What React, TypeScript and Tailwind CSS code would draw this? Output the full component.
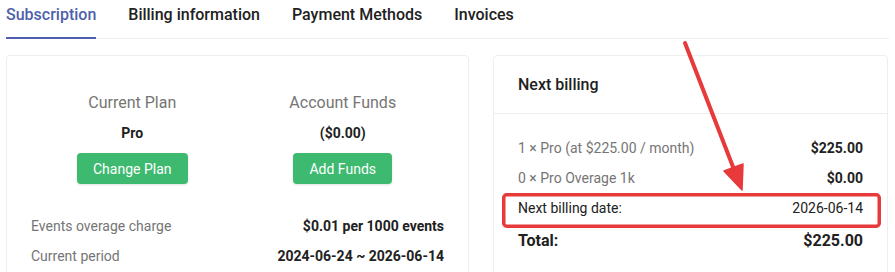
import React from "react";

export default function App() {
  return (
    <div className="relative w-[895px] h-[272px] overflow-hidden bg-white text-[#212121]" style={{ fontFamily: "Roboto, 'Liberation Sans', sans-serif" }}>
      <div className="mx-[6px] flex gap-8 h-[39px] border-b border-[#eeeeee]">
        <div className="h-[39px] -mb-px border-b-2 border-[#4f5fad] text-[#4f5fad] text-base font-medium leading-[30px]">Subscription</div>
        <div className="h-[39px] text-base font-medium leading-[30px]">Billing information</div>
        <div className="h-[39px] text-base font-medium leading-[30px]">Payment Methods</div>
        <div className="h-[39px] text-base font-medium leading-[30px]">Invoices</div>
      </div>

      <div className="mt-4 px-[6px] flex gap-[24px] items-start">
        <div className="w-[463px] border border-[#eeeeee] rounded-sm h-[240px]">
          <div className="grid grid-cols-2 px-[20px] pt-[35px]">
            <div className="flex flex-col items-center">
              <div className="text-base leading-6 text-[#757575]">Current Plan</div>
              <div className="mt-[8px] text-sm leading-5 font-bold">Pro</div>
              <button className="mt-[10px] h-[31px] px-4 bg-[#3dba6f] text-white text-sm rounded-sm shadow-sm">Change Plan</button>
            </div>
            <div className="flex flex-col items-center">
              <div className="text-base leading-6 text-[#757575]">Account Funds</div>
              <div className="mt-[8px] text-sm leading-5 font-bold">($0.00)</div>
              <button className="mt-[10px] h-[31px] px-4 bg-[#3dba6f] text-white text-sm rounded-sm shadow-sm">Add Funds</button>
            </div>
          </div>
          <div className="mt-[27px] px-6 text-sm">
            <div className="flex justify-between items-center h-[30px]">
              <span className="text-[#757575]">Events overage charge</span>
              <span className="font-bold">$0.01 per 1000 events</span>
            </div>
            <div className="flex justify-between items-center h-[30px]">
              <span className="text-[#757575]">Current period</span>
              <span className="font-bold">2024-06-24 ~ 2026-06-14</span>
            </div>
          </div>
        </div>

        <div className="w-[395px] border border-[#eeeeee] rounded-sm h-[240px]">
          <div className="h-[58px] px-6 flex items-center border-b border-[#eeeeee] text-base font-medium">Next billing</div>
          <div className="px-6 pt-[19px] text-sm">
            <div className="flex justify-between items-center h-[30px]">
              <span className="text-[#757575]">1 × Pro (at $225.00 / month)</span>
              <span className="font-bold">$225.00</span>
            </div>
            <div className="flex justify-between items-center h-[30px]">
              <span className="text-[#757575]">0 × Pro Overage 1k</span>
              <span className="font-bold">$0.00</span>
            </div>
            <div className="flex justify-between items-center h-[30px]">
              <span>Next billing date:</span>
              <span>2026-06-14</span>
            </div>
            <div className="mt-[6px] flex justify-between items-center h-6 text-base font-bold">
              <span>Total:</span>
              <span>$225.00</span>
            </div>
          </div>
        </div>
      </div>

      <svg className="absolute inset-0 pointer-events-none" width="895" height="272" viewBox="0 0 895 272">
        <rect x="503.75" y="194.75" width="375.5" height="31.5" rx="3" fill="none" stroke="#e8393b" strokeWidth="3.5" />
        <line x1="685" y1="43" x2="735" y2="172" stroke="#e8393b" strokeWidth="4" strokeLinecap="round" />
        <polygon points="742,190 724,171 743,164" fill="#e8393b" stroke="#e8393b" strokeWidth="1.5" strokeLinejoin="round" />
      </svg>
    </div>
  );
}
